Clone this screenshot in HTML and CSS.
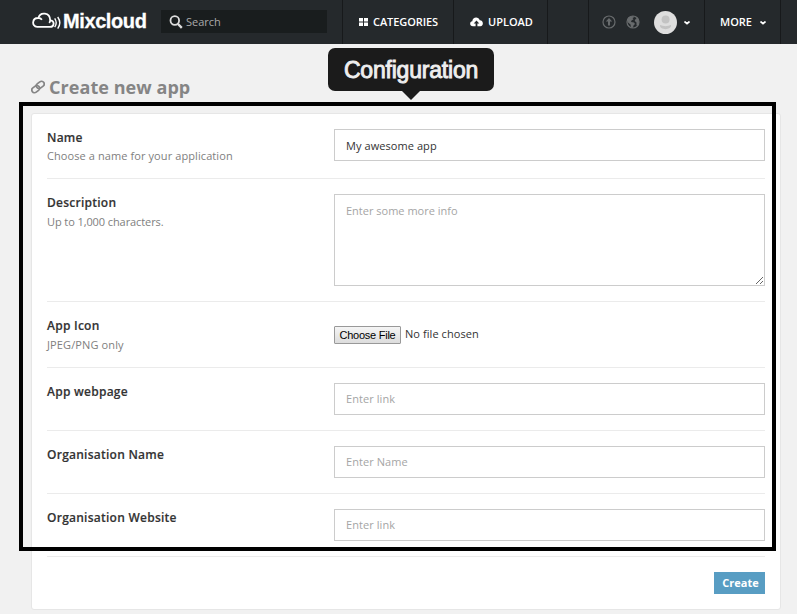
FILE: index.html
```html
<!DOCTYPE html>
<html lang="en">
<head>
<meta charset="utf-8">
<title>Create new app | Mixcloud</title>
<link rel="stylesheet" href="styles.css">
</head>
<body>
<header class="topbar">
  <div class="brand">
    <svg class="brand-icon" width="30" height="18" viewBox="0 0 30 18" fill="none" stroke="#fff" stroke-width="1.800">
      <path d="M5 14.900H17.800c5 0 5-6.600.400-6.600C18 .3 8.300-.6 6.400 6 -.2 5.800-.5 14.500 5 14.900M6.400 6c1.600 0 2.700.6 3.500 1.700M18.200 8.300c-.1 1.100-.4 1.800-1 2.600"/>
      <path stroke-width="1.400" d="M22.700 6.300c1.900 2.800 1.900 6.100 0 8.900M25.700 5c2.700 3.700 2.700 8 0 11.700"/>
    </svg>
    <span class="brand-name">Mixcloud</span>
  </div>
  <div class="search">
    <svg width="14" height="14" viewBox="0 0 14 14" fill="none" stroke="#ddd"><circle cx="5.800" cy="5.500" r="4.300" stroke-width="1.800"/><path d="M9 9l3.800 3.800" stroke-width="2.400"/></svg>
    <span>Search</span>
  </div>
  <nav class="nav">
    <a class="cell categories"><svg width="9" height="8" viewBox="0 0 9 8" fill="#fff"><path d="M0 0h4v3.500H0zM5 0h4v3.500H5zM0 4.500h4V8H0zM5 4.500h4V8H5z"/></svg><span>CATEGORIES</span></a>
    <a class="cell upload"><svg width="13" height="10" viewBox="0 0 13 10"><path fill="#fff" d="M3 9.200C-.7 9-.6 4.700 2.300 4.300 2.300-.3 8.800-.8 9.700 3.300c3.800-.2 4.300 5.500.8 5.900z"/><path fill="#25292c" d="M6.500 3.500L9.300 6.500H7.400V10H5.600V6.500H3.700z"/></svg><span>UPLOAD</span></a>
    <span class="cell gap"></span>
    <div class="cell account">
      <svg width="14" height="14" viewBox="0 0 14 14" fill="none" stroke="#686b6d"><circle cx="7" cy="7" r="6" stroke-width="1.200"/><path fill="#686b6d" stroke="none" d="M7 3L10.200 6.500H8V10.500H6V6.500H3.800z"/></svg>
      <svg class="globe" width="14" height="14" viewBox="0 0 14 14"><circle cx="7" cy="7" r="6" fill="#25292c" stroke="#686b6d" stroke-width="1.200"/><path fill="#686b6d" d="M1 5L3 2 7 1 8.500 2 6.500 3 7.500 4.200 5.500 5.500 5 7 8 7.500 9 9 7.500 10.500 7 12.800 5 12.500 4.500 9.500 2 7.500zM9.500 2L12 3.500 13 7 12 10 10.500 10.500 10.500 7.500 8.800 6 9 4.500 10.500 4z"/></svg>
      <svg class="avatar" width="23" height="23" viewBox="0 0 23 23"><circle cx="11.500" cy="11.500" r="11.500" fill="#dedede"/><circle cx="11.600" cy="8.600" r="4" fill="#c3c3c3"/><path fill="#c3c3c3" d="M6 14c3.300 1.500 7.700 1.500 11 0 .8 5.500-11.800 5.500-11 0z"/></svg>
      <svg class="chevron" width="6" height="4" viewBox="0 0 6 4" fill="none" stroke="#fff" stroke-width="1.700"><path d="M.5.500L3 2.700 5.500.500"/></svg>
    </div>
    <a class="cell more"><span>MORE</span><svg class="chevron" width="6" height="4" viewBox="0 0 6 4" fill="none" stroke="#fff" stroke-width="1.700"><path d="M.5.500L3 2.700 5.500.500"/></svg></a>
  </nav>
</header>
<main class="page">
  <h1 class="title">
    <svg width="14" height="14" viewBox="0 0 14 14" fill="none" stroke="#858585" stroke-width="1.700"><rect x="-4.200" y="-2.700" width="8.400" height="5.400" rx="2.700" transform="translate(9.300 4.900) rotate(-38)"/><rect x="-4.200" y="-2.700" width="8.400" height="5.400" rx="2.700" transform="translate(4.700 9.100) rotate(-38)"/></svg>
    <span>Create new app</span>
  </h1>
  <form class="card">
    <div class="row row-name">
      <div class="info"><label for="name">Name</label><p class="h-name">Choose a name for your application</p></div>
      <input id="name" type="text" value="My awesome app">
    </div>
    <div class="row row-description">
      <div class="info"><label for="description">Description</label><p class="h-limit">Up to 1,000 characters.</p></div>
      <textarea id="description" placeholder="Enter some more info"></textarea>
    </div>
    <div class="row row-icon">
      <div class="info"><label>App Icon</label><p>JPEG/PNG only</p></div>
      <div class="file"><button type="button">Choose File</button><span>No file chosen</span></div>
    </div>
    <div class="row">
      <div class="info"><label for="webpage">App webpage</label></div>
      <input id="webpage" type="text" placeholder="Enter link">
    </div>
    <div class="row">
      <div class="info"><label for="org">Organisation Name</label></div>
      <input id="org" type="text" placeholder="Enter Name">
    </div>
    <div class="row">
      <div class="info"><label for="site">Organisation Website</label></div>
      <input id="site" type="text" placeholder="Enter link">
    </div>
    <div class="actions"><button class="create" type="button">Create</button></div>
  </form>
</main>
<div class="highlight"></div>
<div class="callout">Configuration</div>
</body>
</html>
```
FILE: styles.css
```css
* { box-sizing: border-box; }
body {
  margin: 0;
  height: 614px;
  overflow: hidden;
  position: relative;
  background: #f1f1f1;
  color: #333;
  font: 11px/16px "Open Sans", "Noto Sans", sans-serif;
}
svg { display: block; flex: none; }
.topbar { display: flex; height: 44px; background: #25292c; color: #fff; }
.brand { display: flex; width: 161px; padding: 12px 0 0 32px; }
.brand-name {
  margin-left: 1px;
  font: bold 20px/18px "Liberation Sans", Arial, sans-serif;
  letter-spacing: -.4px;
  -webkit-text-stroke: .3px #fff;
}
.search {
  display: flex;
  align-items: center;
  gap: 3px;
  width: 166px;
  height: 23px;
  margin: 10px 15px 0 0;
  padding-left: 8px;
  background: #191d1e;
  color: #aaa;
}
.nav { display: flex; font-weight: 600; }
.cell { display: flex; align-items: center; height: 44px; border-left: 1px solid #17191b; }
.categories { width: 111px; padding-left: 16px; gap: 5px; letter-spacing: -.08px; }
.upload { width: 94px; padding-left: 16px; gap: 5px; }
.gap { width: 41px; }
.account { width: 116px; padding-left: 13px; }
.globe { margin-left: 10px; }
.avatar { margin: 0 7px 0 14px; }
.chevron { margin-top: 2px; }
.more { width: 77px; padding-left: 15px; gap: 8px; border-right: 1px solid #17191b; }
.page { padding: 31px 16px 0 31px; }
.title {
  display: flex;
  align-items: center;
  gap: 4px;
  height: 24px;
  margin: 0 0 14px;
  color: #858585;
  font-size: 18px;
  line-height: 24px;
  font-weight: 700;
  letter-spacing: .06px;
}
.card {
  width: 750px;
  height: 497px;
  padding: 0 15px;
  background: #fff;
  border: 1px solid #e6e6e6;
  border-radius: 3px;
}
.row {
  display: grid;
  grid-template-columns: 287px 431px;
  align-items: start;
  height: 63px;
  padding-top: 15px;
  border-bottom: 1px solid #ebebeb;
}
.row-name { height: 65px; }
.row-description { height: 123px; }
.row-icon { height: 66px; }
.info label { display: block; font-size: 12px; line-height: 18px; font-weight: 600; letter-spacing: .25px; -webkit-text-stroke: .15px #333; }
.info p { margin: 2px 0 0; line-height: 16px; color: #808080; letter-spacing: .12px; }
.info .h-name { margin-top: 1px; letter-spacing: .09px; }
.info .h-limit { letter-spacing: -.09px; }
input, textarea {
  display: block;
  width: 431px;
  height: 32px;
  margin: 0;
  padding: 0 11px 2px;
  border: 1px solid #ccc;
  border-radius: 0;
  background: #fff;
  color: #333;
  font: inherit;
  letter-spacing: .07px;
  outline: 0;
}
#name { padding: 1px 11px 0; }
textarea { height: 92px; padding-top: 8px; resize: vertical; letter-spacing: 0; }
::placeholder { color: #a5a5a5; opacity: 1; }
.file { display: flex; gap: 4px; padding-top: 9px; letter-spacing: .07px; }
.file button {
  width: 67px;
  height: 18px;
  padding: 0;
  border: 1px solid #999;
  border-radius: 1px;
  background: linear-gradient(#f5f5f5, #ddd);
  color: #000;
  font: 11px/16px "Liberation Sans", Arial, sans-serif;
  letter-spacing: -.25px;
}
.actions { display: flex; justify-content: flex-end; padding-top: 15px; }
.create {
  width: 51px;
  height: 22px;
  padding: 0 0 0 2px;
  border: 0;
  background: #589dc3;
  color: #fff;
  font: 700 11px/22px "Open Sans", "Noto Sans", sans-serif;
}
.highlight {
  position: absolute;
  left: 19px;
  top: 102px;
  width: 757px;
  height: 449px;
  border: 4px solid #000;
  pointer-events: none;
}
.callout {
  position: absolute;
  left: 328px;
  top: 48px;
  width: 166px;
  height: 43px;
  border-radius: 7px;
  background: #1b1b1b;
  color: #eee;
  font: 23px/44px "Liberation Sans", Arial, sans-serif;
  letter-spacing: -.2px;
  -webkit-text-stroke: .9px #eee;
  text-align: center;
}
.callout::after {
  content: "";
  position: absolute;
  left: 74px;
  top: 43px;
  border: 9px solid transparent;
  border-top-color: #1b1b1b;
  border-bottom: 0;
}
```
